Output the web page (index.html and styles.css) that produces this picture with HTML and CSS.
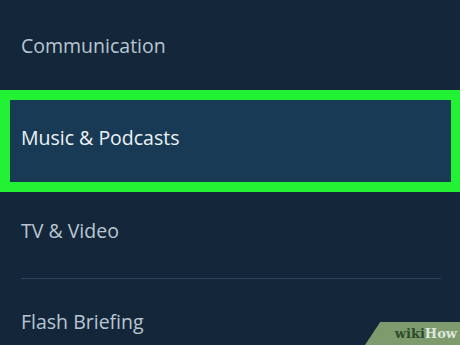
FILE: index.html
```html
<!DOCTYPE html>
<html lang="en">
<head>
  <meta charset="UTF-8" />
  <title>Settings</title>
  <link rel="stylesheet" href="styles.css">
</head>
<body>
  <ul class="menu">
    <li class="item item-top">Communication</li>
    <li class="item item-active"><span>Music &amp; Podcasts</span></li>
    <li class="item item-tv">TV &amp; Video</li>
    <li class="item item-last">Flash Briefing</li>
  </ul>
  <div class="watermark"><span class="wiki">wiki</span><span class="how">How</span></div>
</body>
</html>
```

FILE: styles.css
```css
html, body {
  margin: 0;
  height: 100%;
  overflow: hidden;
}

body {
  background: #13263a;
  font-family: 'Open Sans', sans-serif;
  position: relative;
}

.menu {
  list-style: none;
  margin: 0;
  padding: 0;
}

.item {
  display: flex;
  align-items: center;
  box-sizing: border-box;
  padding-left: 21px;
  font-size: 19.5px;
  color: #b9c6d1;
}

.item-top {
  height: 90px;
}

.item-active {
  height: 102px;
  border: 10px solid #22f233;
  border-right-width: 9px;
  padding-left: 11px;
  padding-bottom: 8px;
  background: #183a54;
  color: #eef3f7;
}

.item-tv {
  height: 86px;
  padding-bottom: 9px;
}

.item-last {
  height: 67px;
  margin: 0 19px 0 21px;
  padding-left: 0;
  padding-top: 29px;
  border-top: 1px solid #2c4459;
  align-items: flex-start;
}

.watermark {
  position: absolute;
  right: 0;
  bottom: 0;
  width: 95px;
  height: 23px;
  background: #7d9b6c;
  clip-path: polygon(16% 0, 100% 0, 100% 100%, 0 100%);
  font-family: 'DejaVu Serif', serif;
  font-weight: bold;
  font-size: 13px;
  display: flex;
  align-items: center;
  justify-content: flex-end;
  padding-right: 3px;
  box-sizing: border-box;
}

.wiki {
  color: #2e4a2c;
}

.how {
  color: #dfe8dc;
}
```
